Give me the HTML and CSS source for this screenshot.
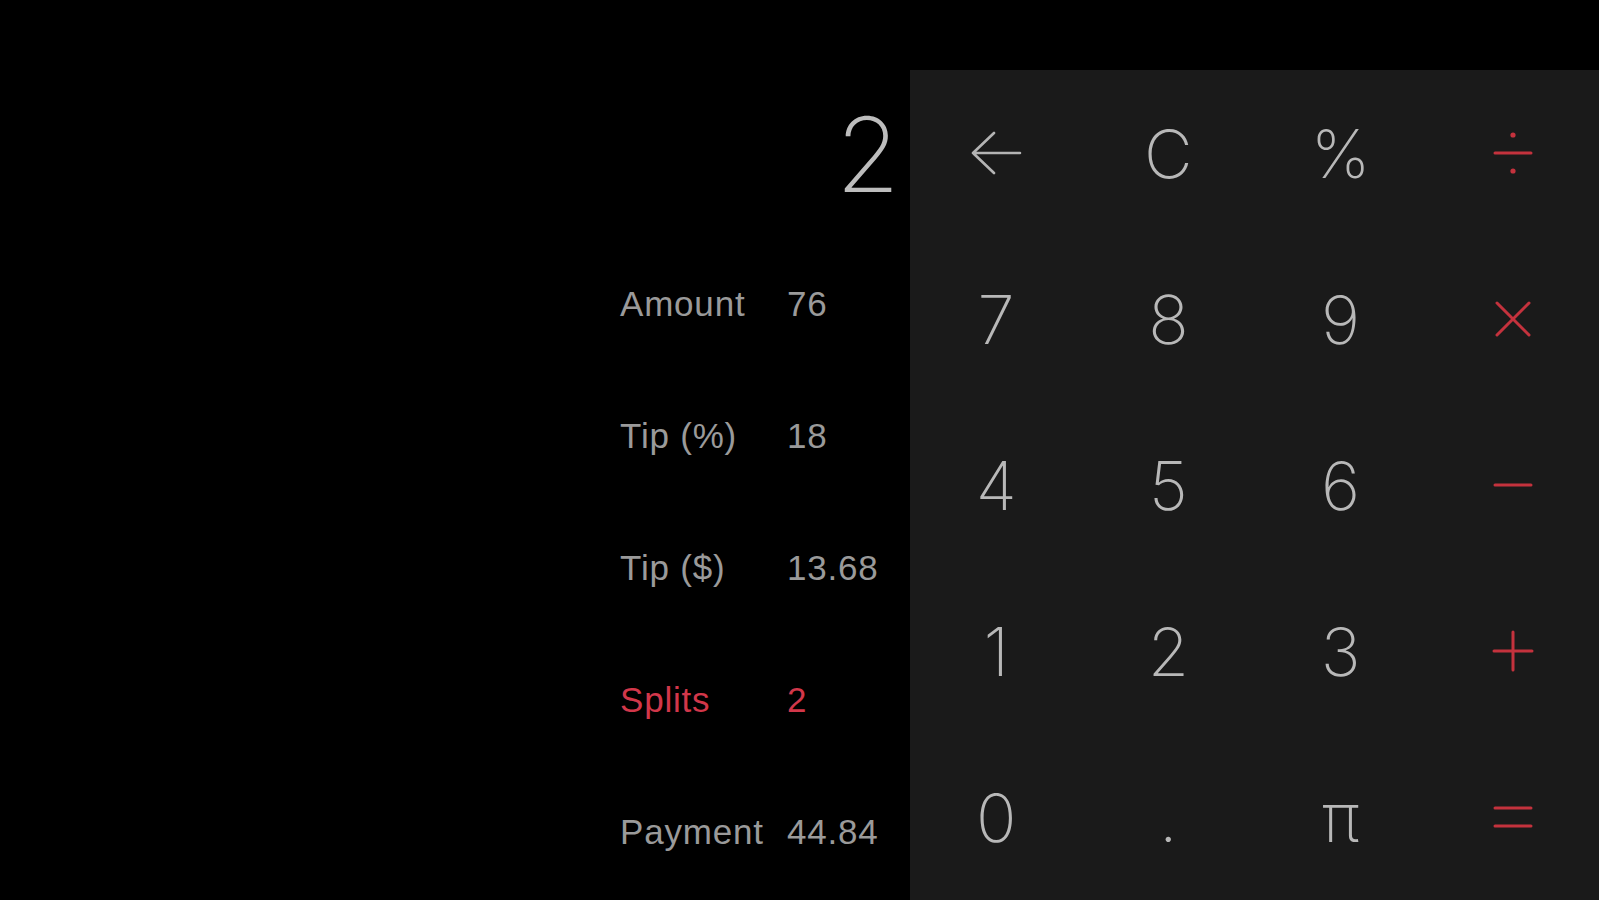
FILE: index.html
```html
<!DOCTYPE html>
<html lang="en">
<head>
<meta charset="utf-8">
<title>Tip Calculator</title>
<link rel="stylesheet" href="styles.css">
</head>
<body>
<div class="app">
  <section class="info">
    <div class="display"><span class="display-value">2</span></div>
    <div class="table">
      <div class="row"><span class="label">Amount</span><span class="value">76</span></div>
      <div class="row"><span class="label">Tip (%)</span><span class="value">18</span></div>
      <div class="row"><span class="label">Tip ($)</span><span class="value">13.68</span></div>
      <div class="row active"><span class="label">Splits</span><span class="value">2</span></div>
      <div class="row"><span class="label">Payment</span><span class="value">44.84</span></div>
    </div>
  </section>
  <section class="pad-wrap">
    <div class="keypad">
      <div class="key"><svg class="icon" width="52" height="44" viewBox="0 0 52 44"><path d="M50 22H3M24 2L3 22L24 42" fill="none" stroke="#b4b4b4" stroke-width="2.6" stroke-linecap="round" stroke-linejoin="round"/></svg></div>
      <div class="key">C</div>
      <div class="key">%</div>
      <div class="key op"><svg width="42" height="46" viewBox="0 0 42 46"><path d="M3 23H39" stroke="#c4323d" stroke-width="3" stroke-linecap="round"/><circle cx="21" cy="5" r="2.6" fill="#c4323d"/><circle cx="21" cy="41" r="2.6" fill="#c4323d"/></svg></div>

      <div class="key">7</div>
      <div class="key">8</div>
      <div class="key">9</div>
      <div class="key op"><svg width="38" height="38" viewBox="0 0 38 38"><path d="M3 3L35 35M35 3L3 35" stroke="#c4323d" stroke-width="3" stroke-linecap="round"/></svg></div>

      <div class="key">4</div>
      <div class="key">5</div>
      <div class="key">6</div>
      <div class="key op"><svg width="42" height="10" viewBox="0 0 42 10"><path d="M3 5H39" stroke="#c4323d" stroke-width="3" stroke-linecap="round"/></svg></div>

      <div class="key">1</div>
      <div class="key">2</div>
      <div class="key">3</div>
      <div class="key op"><svg width="44" height="44" viewBox="0 0 44 44"><path d="M3 22H41M22 3V41" stroke="#c4323d" stroke-width="3" stroke-linecap="round"/></svg></div>

      <div class="key">0</div>
      <div class="key">.</div>
      <div class="key">π</div>
      <div class="key op"><svg width="42" height="26" viewBox="0 0 42 26"><path d="M3 4H39M3 22H39" stroke="#c4323d" stroke-width="3" stroke-linecap="round"/></svg></div>
    </div>
  </section>
</div>
</body>
</html>
```

FILE: styles.css
```css
html, body {
  margin: 0;
  padding: 0;
  background: #000;
  height: 100%;
}

body {
  font-family: Inter, "Liberation Sans", sans-serif;
  color: #b4b4b4;
}

.app {
  display: flex;
  width: 1599px;
  height: 900px;
  overflow: hidden;
}

.info {
  width: 910px;
  flex: none;
  display: flex;
  flex-direction: column;
}

.display {
  height: 168px;
  padding-top: 70px;
  padding-right: 10px;
  display: flex;
  align-items: center;
  justify-content: flex-end;
}

.display-value {
  font-size: 104px;
  font-weight: 200;
  color: #bdbdbd;
  line-height: normal;
}

.table {
  margin-left: 620px;
  display: flex;
  flex-direction: column;
}

.row {
  height: 132px;
  display: flex;
  align-items: center;
  font-family: "Liberation Sans", Arial, sans-serif;
  font-size: 35px;
  letter-spacing: 0.8px;
  color: #9a9a9a;
}

.label {
  width: 167px;
  flex: none;
}

.row.active {
  color: #d2374a;
}

.pad-wrap {
  flex: 1;
  padding-top: 70px;
  display: flex;
  flex-direction: column;
}

.keypad {
  flex: 1;
  background: #1a1a1a;
  display: grid;
  grid-template-columns: repeat(4, 1fr);
  grid-template-rows: repeat(5, 1fr);
}

.key {
  display: flex;
  align-items: center;
  justify-content: center;
  font-size: 67px;
  font-weight: 200;
  color: #b8b8b8;
  line-height: normal;
}

.key svg {
  display: block;
}
```
